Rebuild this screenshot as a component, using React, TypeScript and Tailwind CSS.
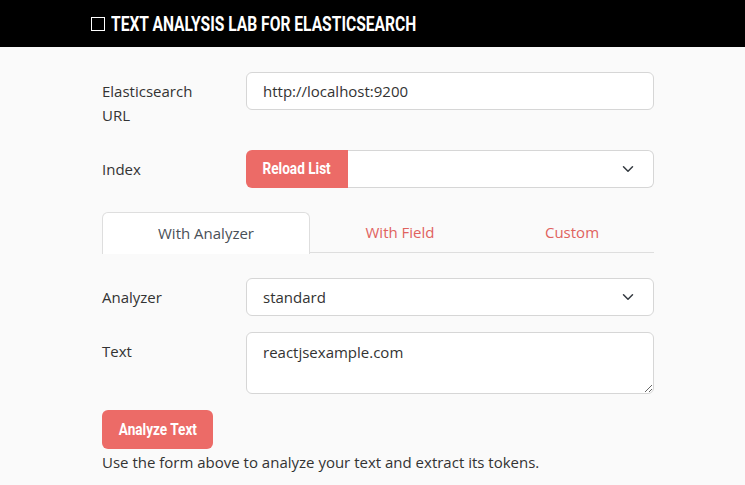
import { useState } from 'react';

const body = { fontFamily: '"Open Sans", "Noto Sans", sans-serif' };
const cond = { fontFamily: 'Roboto, "Liberation Sans", sans-serif' };

function Chevron() {
    return (
        <svg width="12" height="12" viewBox="0 0 16 16" fill="none" stroke="#343a40" strokeWidth="2" strokeLinecap="round" strokeLinejoin="round">
            <path d="M2 5l6 6 6-6" />
        </svg>
    );
}

export default function App() {
    const [tab, setTab] = useState(0);
    const tabs = ['With Analyzer', 'With Field', 'Custom'];
    const tabWidths = ['w-[208px]', 'w-[180px]', 'flex-1'];

    return (
        <div className="min-h-[485px] bg-[#fafafa] text-[#333]" style={body}>
            <header className="h-[47px] bg-black flex items-center pl-[91px]">
                <h1 className="flex items-center gap-[6px] text-white text-[20px] font-bold">
                    <span className="inline-block w-[14px] h-[14px] border-[1.5px] border-white" />
                    <span className="inline-block scale-x-[0.78] origin-left whitespace-nowrap" style={cond}>
                        TEXT ANALYSIS LAB FOR ELASTICSEARCH
                    </span>
                </h1>
            </header>

            <main className="ml-[102px] w-[552px] pt-[25px] text-[15px]">
                {/* URL */}
                <div className="flex">
                    <label className="w-[144px] pr-[40px] pt-[7px] leading-[24px]">Elasticsearch URL</label>
                    <input
                        className="flex-1 h-[38px] bg-white border border-[#d6d6d6] rounded-[6px] px-[16px] outline-none"
                        defaultValue="http://localhost:9200"
                    />
                </div>

                {/* Index */}
                <div className="flex items-center mt-[23px]">
                    <label className="w-[144px] leading-[24px]">Index</label>
                    <div className="flex-1 flex h-[38px]">
                        <button className="h-full w-[102px] bg-[#ec6b67] text-white text-[17px] font-bold rounded-l-[6px]" style={cond}>
                            <span className="inline-block scale-x-[0.8] whitespace-nowrap">Reload List</span>
                        </button>
                        <div className="flex-1 flex items-center justify-end pr-[19px] bg-white border border-l-0 border-[#d6d6d6] rounded-r-[6px]">
                            <Chevron />
                        </div>
                    </div>
                </div>

                {/* Tabs */}
                <div className="flex mt-[24px] h-[41px] border-b border-[#dedede]">
                    {tabs.map((t, i) => (
                        <button
                            key={t}
                            onClick={() => setTab(i)}
                            className={`${tabWidths[i]} text-[15px] ${tab === i
                                ? 'bg-white border border-b-0 border-[#dedede] rounded-t-[6px] text-[#495057] h-[42px]'
                                : 'h-full text-[#e0625e]'}`}
                        >
                            {t}
                        </button>
                    ))}
                </div>

                {/* Analyzer */}
                <div className="flex items-center mt-[25px]">
                    <label className="w-[144px] leading-[24px]">Analyzer</label>
                    <div className="flex-1 h-[38px] flex items-center justify-between bg-white border border-[#d6d6d6] rounded-[6px] pl-[16px] pr-[19px]">
                        <span>standard</span>
                        <Chevron />
                    </div>
                </div>

                {/* Text */}
                <div className="flex mt-[16px]">
                    <label className="w-[144px] pt-[7px] leading-[24px]">Text</label>
                    <textarea
                        className="flex-1 h-[62px] bg-white border border-[#d6d6d6] rounded-[6px] px-[16px] py-[7px] leading-[24px] outline-none"
                        defaultValue="reactjsexample.com"
                    />
                </div>

                <button className="mt-[16px] h-[39px] w-[111px] bg-[#ec6b67] text-white text-[17px] font-bold rounded-[6px]" style={cond}>
                    <span className="inline-block scale-x-[0.8] whitespace-nowrap">Analyze Text</span>
                </button>
                <p className="mt-[1px] leading-[24px]">Use the form above to analyze your text and extract its tokens.</p>
            </main>
        </div>
    );
}
